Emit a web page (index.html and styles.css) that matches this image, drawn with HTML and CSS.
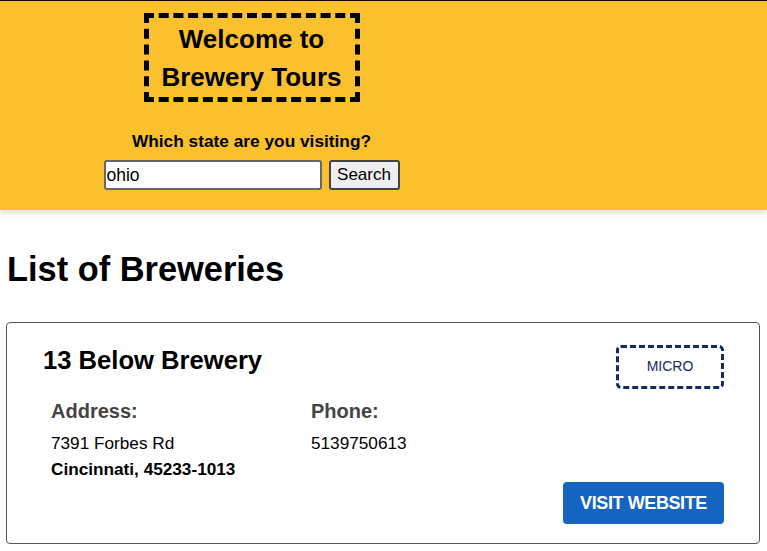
FILE: index.html
```html
<!DOCTYPE html>
<html>
<head>
<meta charset="utf-8">
<link rel="stylesheet" href="styles.css">
</head>
<body>
<header class="hero">
  <div class="hero-inner">
    <div class="title-box">Welcome to<br>Brewery Tours</div>
    <form class="search">
      <label class="search-label" for="state">Which state are you visiting?</label>
      <div class="search-row">
        <input id="state" class="search-input" type="text" value="ohio">
        <button type="button" class="search-btn">Search</button>
      </div>
    </form>
  </div>
</header>
<main class="content">
  <h1 class="list-title">List of Breweries</h1>
  <article class="card">
    <div class="card-top">
      <h2 class="card-name">13 Below Brewery</h2>
      <div class="badge">MICRO</div>
    </div>
    <div class="card-info">
      <div class="col col-address">
        <h3 class="label">Address:</h3>
        <p class="line">7391 Forbes Rd</p>
        <p class="line strong">Cincinnati, 45233-1013</p>
      </div>
      <div class="col">
        <h3 class="label">Phone:</h3>
        <p class="line">5139750613</p>
      </div>
    </div>
    <div class="card-actions">
      <a class="visit">VISIT WEBSITE</a>
    </div>
  </article>
</main>
</body>
</html>
```
FILE: styles.css
```css
* { box-sizing: border-box; }
html, body { margin: 0; padding: 0; background: #fff; }
body { font-family: "Liberation Sans", Arial, sans-serif; color: #000; }

.hero {
  background: #fbc02d;
  border-top: 1px solid #000;
  height: 210px;
  box-shadow: 0 3px 6px rgba(0,0,0,0.12);
}
.hero-inner {
  width: 503px;
  display: flex;
  flex-direction: column;
  align-items: center;
  padding-top: 12px;
}
.title-box {
  border: 5px dashed #000;
  padding: 2px 0 1px;
  width: 216px;
  font-size: 26px;
  font-weight: bold;
  line-height: 38px;
  text-align: center;
  white-space: nowrap;
}
.search {
  margin-top: 29px;
  display: flex;
  flex-direction: column;
  align-items: center;
}
.search-label {
  font-size: 17.3px;
  font-weight: bold;
  line-height: 20px;
}
.search-row {
  margin-top: 9px;
  display: flex;
  gap: 7px;
}
.search-input {
  width: 218px;
  height: 30px;
  border: 2px solid #666;
  border-radius: 3px;
  padding: 0 1px;
  font-family: "Liberation Sans", Arial, sans-serif;
  font-size: 17.5px;
  color: #000;
  background: #fff;
}
.search-btn {
  width: 71px;
  height: 30px;
  border: 2px solid #444;
  border-radius: 3px;
  background: #efefef;
  font-family: "Liberation Sans", Arial, sans-serif;
  font-size: 17px;
  color: #000;
  padding: 0;
}

.content { padding: 0 8px 0 6px; }
.list-title {
  margin: 41px 0 0 1px;
  font-size: 34.4px;
  line-height: 37px;
  font-weight: bold;
}
.card {
  margin-top: 34px;
  width: 754px;
  height: 222px;
  border: 1px solid #555;
  border-radius: 4px;
  padding: 22px 35px 0 36px;
}
.card-top {
  display: flex;
  justify-content: space-between;
  align-items: flex-start;
}
.card-name {
  margin: 0;
  font-size: 25.6px;
  line-height: 30px;
  font-weight: bold;
}
.badge {
  width: 108px;
  height: 44px;
  border: 3px dashed #14295e;
  border-radius: 5px;
  display: flex;
  align-items: center;
  justify-content: center;
  font-size: 14px;
  color: #14295e;
  padding-bottom: 3px;
}
.card-info {
  display: flex;
  margin-top: 9px;
  padding-left: 8px;
}
.col-address { width: 260px; }
.label {
  margin: 0;
  font-size: 20px;
  line-height: 26px;
  font-weight: bold;
  color: #444;
}
.line {
  margin: 9px 0 0;
  font-size: 17.2px;
  line-height: 20px;
  color: #000;
}
.line + .line { margin-top: 6px; }
.strong { font-weight: bold; }
.card-actions {
  display: flex;
  justify-content: flex-end;
  margin-top: 3px;
}
.visit {
  width: 161px;
  height: 42px;
  background: #1565c0;
  border-radius: 4px;
  color: #fff;
  font-weight: bold;
  font-size: 18px;
  display: flex;
  align-items: center;
  justify-content: center;
  letter-spacing: -0.4px;
}
```
